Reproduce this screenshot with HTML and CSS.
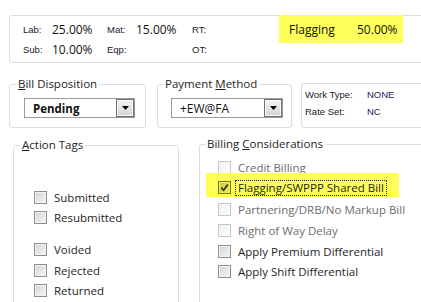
FILE: index.html
```html
<!DOCTYPE html>
<html>
<head>
<meta charset="utf-8">
<link rel="stylesheet" href="styles.css">
</head>
<body>
<div class="summary">
  <div class="rates">
    <span class="lbl">Lab:</span><span class="val">25.00%</span><span class="lbl">Mat:</span><span class="val">15.00%</span><span class="lbl">RT:</span>
    <span class="lbl">Sub:</span><span class="val">10.00%</span><span class="lbl">Eqp:</span><span class="val"></span><span class="lbl">OT:</span>
  </div>
  <div class="flag"><span>Flagging</span><span>50.00%</span></div>
</div>

<div class="row2">
  <fieldset class="grp disp">
    <legend><u>B</u>ill Disposition</legend>
    <div class="combo combo-disp">
      <span class="combo-text strong">Pending</span>
      <span class="combo-btn"><svg width="7" height="4" viewBox="0 0 7 4"><path d="M0 0H7L3.5 4Z" fill="#000"/></svg></span>
    </div>
  </fieldset>
  <fieldset class="grp pay">
    <legend>Payment <u>M</u>ethod</legend>
    <div class="combo combo-pay">
      <span class="combo-text">+EW@FA</span>
      <span class="combo-btn"><svg width="7" height="4" viewBox="0 0 7 4"><path d="M0 0H7L3.5 4Z" fill="#000"/></svg></span>
    </div>
  </fieldset>
  <div class="info">
    <span class="lbl">Work Type:</span><span class="ival">NONE</span>
    <span class="lbl">Rate Set:</span><span class="ival">NC</span>
  </div>
</div>

<div class="row3">
  <fieldset class="grp tags">
    <legend><u>A</u>ction Tags</legend>
    <div class="list tag-list">
      <div class="item"><span class="cb"></span><span class="txt">Submitted</span></div>
      <div class="item"><span class="cb"></span><span class="txt">Resubmitted</span></div>
      <div class="spacer"></div>
      <div class="item"><span class="cb"></span><span class="txt">Voided</span></div>
      <div class="item"><span class="cb"></span><span class="txt">Rejected</span></div>
      <div class="item"><span class="cb"></span><span class="txt">Returned</span></div>
    </div>
  </fieldset>
  <fieldset class="grp billing">
    <legend>Billing <u>C</u>onsiderations</legend>
    <div class="list bill-list">
      <div class="item off"><span class="cb"></span><span class="txt">Credit Billing</span></div>
      <div class="item hl"><span class="cb checked"><svg width="9" height="9" viewBox="0 0 9 9"><path d="M1.3 4.6L3.6 7.2L7.8 1.6" stroke="#2c2c12" stroke-width="1.7" fill="none"/></svg></span><span class="txt focus">Flagging/SWPPP Shared Bill</span></div>
      <div class="item off"><span class="cb"></span><span class="txt">Partnering/DRB/No Markup Bill</span></div>
      <div class="item off"><span class="cb"></span><span class="txt">Right of Way Delay</span></div>
      <div class="item"><span class="cb"></span><span class="txt">Apply Premium Differential</span></div>
      <div class="item"><span class="cb"></span><span class="txt">Apply Shift Differential</span></div>
    </div>
  </fieldset>
</div>
</body>
</html>
```

FILE: styles.css
```css
html, body {
  margin: 0;
  padding: 0;
  background: #fff;
}
body {
  width: 421px;
  height: 302px;
  overflow: hidden;
  font-family: "Open Sans", "Noto Sans", sans-serif;
  color: #1e1e1e;
}

/* summary strip */
.summary {
  box-sizing: border-box;
  display: flex;
  width: 450px;
  height: 48px;
  margin: 15px 0 0 9px;
  padding-top: 3px;
  border: 1px solid #d6dde3;
  border-radius: 3px;
}
.rates {
  flex: none;
  display: grid;
  grid-template-columns: 29px 55px 29px 56px 30px;
  grid-auto-rows: 20px;
  align-items: center;
  padding-left: 13px;
}
.lbl {
  font-family: "Liberation Sans", Arial, sans-serif;
  font-size: 9.5px;
  color: #1a1a2a;
}
.val {
  font-size: 12px;
  color: #111;
}
.flag {
  flex: none;
  box-sizing: border-box;
  display: grid;
  grid-template-columns: 68px auto;
  align-items: center;
  width: 124px;
  height: 28px;
  margin: -4px 0 0 57px;
  padding-left: 10px;
  background: #ffff5a;
  font-size: 12px;
  color: #111;
}

/* group boxes */
.grp {
  flex: none;
  box-sizing: border-box;
  margin: 0;
  min-width: 0;
  border: 1px solid #d5dfe5;
  border-radius: 3px;
}
.grp legend {
  padding: 0 2px;
  font-size: 11.5px;
  line-height: 16px;
  color: #1e1e1e;
}

.row2 {
  display: flex;
  align-items: flex-start;
  width: 460px;
  margin: 13px 0 0 9px;
}
.disp {
  width: 137px;
  padding: 0 9px 9px 6px;
}
.pay {
  width: 135px;
  margin-left: 11px;
  padding: 0 9px 9px 5px;
}
.combo {
  box-sizing: border-box;
  display: flex;
  align-items: center;
  height: 20px;
  margin: 6px 0 0 8px;
  border: 1px solid #9a9a9a;
  background: #fff;
}
.combo-disp { width: 111px; }
.combo-pay { width: 112px; }
.combo-text {
  padding-left: 8px;
  font-size: 12px;
  color: #111;
}
.combo-text.strong {
  font-weight: 700;
  font-size: 11.5px;
}
.combo-btn {
  box-sizing: border-box;
  display: flex;
  align-items: center;
  justify-content: center;
  width: 18px;
  height: 18px;
  margin-left: auto;
  border: 1px solid #707070;
  background: linear-gradient(#f3f3f3, #e4e4e4 50%, #d4d4d4);
  box-shadow: inset 0 0 0 1px #fbfbfb;
}
.info {
  flex: none;
  box-sizing: border-box;
  display: grid;
  grid-template-columns: 62px auto;
  grid-auto-rows: 17px;
  align-items: center;
  width: 140px;
  height: 45px;
  margin: 7px 0 0 9px;
  padding: 2px 0 0 3px;
  border: 1px solid #d5dfe5;
  border-radius: 3px;
}
.ival {
  font-family: "Liberation Sans", Arial, sans-serif;
  font-size: 9.5px;
  color: #1b1b5a;
}

/* lower groups */
.row3 {
  display: flex;
  align-items: flex-start;
  width: 470px;
  margin: 9px 0 0 13px;
}
.tags {
  width: 166px;
  height: 200px;
  padding: 0 0 0 6px;
}
.billing {
  width: 260px;
  height: 200px;
  margin: -1px 0 0 20px;
  padding: 0 0 0 5px;
}
.list {
  display: flex;
  flex-direction: column;
}
.tag-list {
  padding: 34px 0 0 14px;
}
.tag-list .item { height: 20.5px; }
.spacer { height: 11.5px; }
.bill-list {
  padding: 5.6px 0 0 13px;
}
.bill-list .item { height: 20.8px; }
.item {
  display: flex;
  align-items: center;
  font-size: 11.5px;
  color: #1e1e1e;
}
.txt { margin-left: 7px; }
.item.off .txt { color: #6d6d6d; }

.cb {
  box-sizing: border-box;
  display: flex;
  align-items: center;
  justify-content: center;
  flex: none;
  width: 13px;
  height: 13px;
  border: 1px solid #8e8f8f;
  background: linear-gradient(135deg, #d3d3d3, #f7f7f7);
  box-shadow: inset 0 0 0 1px #f3f3f3;
}
.item.off .cb {
  border-color: #c5c5c5;
  background: linear-gradient(135deg, #f0f0f0, #fdfdfd);
  box-shadow: none;
}
.cb.checked {
  border-color: #77772c;
  background: linear-gradient(135deg, #c9c94a, #ecec55);
  box-shadow: inset 0 0 0 1px #eeee57;
}

.bill-list .item.hl {
  box-sizing: content-box;
  width: 181px;
  height: 18.8px;
  margin: -5px 0 2px -12px;
  padding: 5px 0 0 12px;
  background: #ffff5a;
}
.txt.focus {
  margin-left: 4px;
  padding: 0 2px;
  border: 1px dotted #222;
  line-height: 14px;
}
```
